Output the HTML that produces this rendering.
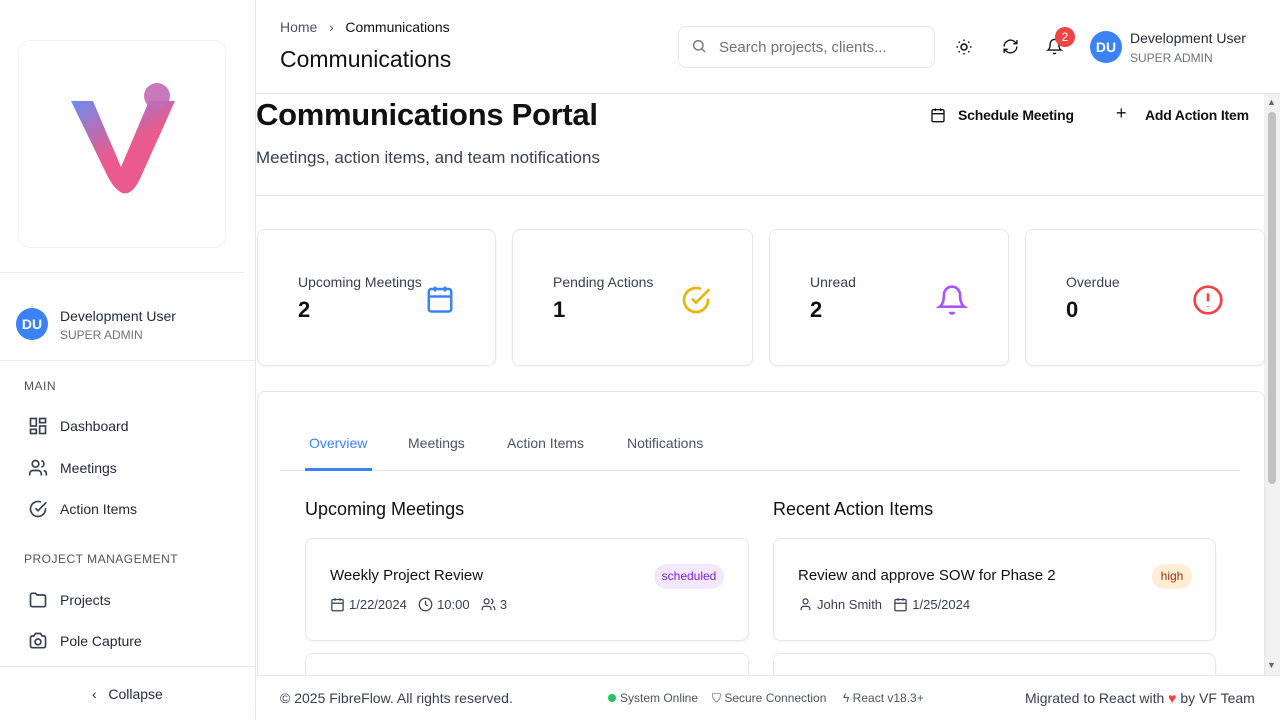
<!DOCTYPE html>
<html style="width:1280px;height:720px;overflow:hidden"><head><meta charset="utf-8"><style>
*{box-sizing:border-box;margin:0;padding:0}
body{width:1280px;height:720px;overflow:hidden;font-family:"Liberation Sans",sans-serif;background:#fff;position:relative;color:#111}
.abs{position:absolute}
svg{display:block}
.side{left:0;top:0;width:256px;height:720px;border-right:1px solid #e6e7eb;background:#fff}
.nav{position:absolute;left:28px;display:flex;align-items:center;font-size:14px;color:#1f2937}
.nav svg{margin-right:12px}
.sec{position:absolute;left:24px;font-size:12px;color:#4b5563;letter-spacing:.5px}
.card{position:absolute;border:1px solid #e5e7eb;border-radius:8px;background:#fff;box-shadow:0 1px 2px rgba(0,0,0,.04)}
.lbl{position:absolute;left:40px;top:44px;font-size:14px;color:#374151}
.num{position:absolute;left:40px;top:67px;font-size:22px;font-weight:bold;color:#111}
.ic{position:absolute;right:40px;top:54px}
.tab{position:absolute;top:435px;font-size:14px;color:#4b5563}
.meta{position:absolute;left:24px;top:58px;display:flex;align-items:center;font-size:13px;color:#374151;gap:4px}
</style></head><body>
<div class="abs side">
 <div class="abs" style="left:18px;top:40px;width:208px;height:208px;border:1px solid #f1f2f4;border-radius:12px">
  <svg class="abs" style="left:50px;top:40px" width="110" height="120" viewBox="0 0 110 120">
   <defs><linearGradient id="g" x1="0" y1="0" x2="0.6" y2="1"><stop offset="0" stop-color="#6b8cf0"/><stop offset=".6" stop-color="#ea5a8c"/></linearGradient></defs>
   <path d="M2 20 L24 20 L52 86 L80 20 L106 20 L70 100 Q60 118 50 110 Q44 106 38 94 Z" fill="url(#g)"/>
   <circle cx="88" cy="15" r="13" fill="#c26ab4" opacity=".9"/>
  </svg>
 </div>
 <div class="abs" style="left:0;top:272px;width:244px;border-top:1px solid #ececf0"></div>
 <div class="abs" style="left:16px;top:308px;width:32px;height:32px;border-radius:50%;background:#3b82f6;color:#fff;font-weight:bold;font-size:14px;text-align:center;line-height:32px">DU</div>
 <div class="abs" style="left:60px;top:308px;font-size:14px;color:#1f2937">Development User</div>
 <div class="abs" style="left:60px;top:328px;font-size:12px;color:#6b7280">SUPER ADMIN</div>
 <div class="abs" style="left:0;top:360px;width:256px;border-top:1px solid #ececf0"></div>
 <div class="sec" style="top:379px">MAIN</div>
 <div class="nav" style="top:416px"><svg width="20" height="20" viewBox="0 0 24 24" fill="none" stroke="#374151" stroke-width="2"><rect x="3" y="3" width="7" height="9"/><rect x="14" y="3" width="7" height="5"/><rect x="14" y="12" width="7" height="9"/><rect x="3" y="16" width="7" height="5"/></svg>Dashboard</div>
 <div class="nav" style="top:458px"><svg width="20" height="20" viewBox="0 0 24 24" fill="none" stroke="#374151" stroke-width="2"><circle cx="9" cy="7" r="4"/><path d="M2 21v-2a4 4 0 014-4h6a4 4 0 014 4v2M16 3.1a4 4 0 010 7.8M22 21v-2a4 4 0 00-3-3.9"/></svg>Meetings</div>
 <div class="nav" style="top:499px"><svg width="20" height="20" viewBox="0 0 24 24" fill="none" stroke="#374151" stroke-width="2"><path d="M21 11.1V12a9 9 0 11-5.3-8.2"/><path d="M9 11l3 3L22 4"/></svg>Action Items</div>
 <div class="sec" style="top:552px">PROJECT MANAGEMENT</div>
 <div class="nav" style="top:590px"><svg width="20" height="20" viewBox="0 0 24 24" fill="none" stroke="#374151" stroke-width="2"><path d="M3 6a2 2 0 012-2h4l2 2h8a2 2 0 012 2v10a2 2 0 01-2 2H5a2 2 0 01-2-2z"/></svg>Projects</div>
 <div class="nav" style="top:631px"><svg width="20" height="20" viewBox="0 0 24 24" fill="none" stroke="#374151" stroke-width="2"><path d="M3 8a2 2 0 012-2h2l2-3h6l2 3h2a2 2 0 012 2v10a2 2 0 01-2 2H5a2 2 0 01-2-2z"/><circle cx="12" cy="13" r="3.5"/></svg>Pole Capture</div>
 <div class="abs" style="left:0;top:666px;width:256px;border-top:1px solid #e6e7eb"></div>
 <div class="abs" style="left:92px;top:686px;font-size:14px;color:#1f2937">‹&nbsp;&nbsp;&nbsp;Collapse</div>
</div>

<div class="abs" style="left:280px;top:19px;font-size:14px;color:#4b5563">Home&nbsp;&nbsp;&nbsp;›&nbsp;&nbsp;&nbsp;<span style="color:#111;">Communications</span></div>
<div class="abs" style="left:280px;top:46px;font-size:23px;color:#111">Communications</div>
<div class="abs" style="left:678px;top:26px;width:257px;height:42px;border:1px solid #e5e7eb;border-radius:8px">
 <svg class="abs" style="left:12px;top:11px" width="16" height="16" viewBox="0 0 24 24" fill="none" stroke="#6b7280" stroke-width="2"><circle cx="11" cy="11" r="7"/><path d="M21 21l-5-5"/></svg>
 <div class="abs" style="left:40px;top:12px;font-size:15px;color:#6b7280">Search projects, clients...</div>
</div>
<svg class="abs" style="left:955px;top:38px" width="18" height="18" viewBox="0 0 24 24" fill="none" stroke="#111" stroke-width="2"><circle cx="12" cy="12" r="4"/><path d="M12 2v2M12 20v2M4.9 4.9l1.4 1.4M17.7 17.7l1.4 1.4M2 12h2M20 12h2M4.9 19.1l1.4-1.4M17.7 6.3l1.4-1.4"/></svg>
<svg class="abs" style="left:1002px;top:38px" width="17" height="17" viewBox="0 0 24 24" fill="none" stroke="#111" stroke-width="2"><path d="M21 12a9 9 0 01-15.5 6.2L3 16M3 12a9 9 0 0115.5-6.2L21 8M21 3v5h-5M3 21v-5h5"/></svg>
<svg class="abs" style="left:1046px;top:38px" width="17" height="17" viewBox="0 0 24 24" fill="none" stroke="#111" stroke-width="2"><path d="M6 8a6 6 0 0112 0c0 7 3 9 3 9H3s3-2 3-9M10.3 21a1.9 1.9 0 003.4 0"/></svg>
<div class="abs" style="left:1055px;top:27px;width:20px;height:20px;border-radius:50%;background:#ef4444;color:#fff;font-size:12px;text-align:center;line-height:20px">2</div>
<div class="abs" style="left:1090px;top:31px;width:32px;height:32px;border-radius:50%;background:#3b82f6;color:#fff;font-weight:bold;font-size:14px;text-align:center;line-height:32px">DU</div>
<div class="abs" style="left:1130px;top:30px;font-size:14px;color:#1f2937">Development User</div>
<div class="abs" style="left:1130px;top:51px;font-size:12px;color:#6b7280">SUPER ADMIN</div>
<div class="abs" style="left:256px;top:93px;width:1024px;border-top:1px solid #e6e7eb"></div>

<div class="abs" style="left:1264px;top:94px;width:16px;height:581px;background:#f1f1f1"></div>
<div class="abs" style="left:1268px;top:112px;width:8px;height:372px;background:#c1c1c1;border-radius:4px"></div>
<div class="abs" style="left:1267px;top:97px;font-size:9px;color:#666">▲</div>
<div class="abs" style="left:1267px;top:660px;font-size:9px;color:#666">▼</div>

<div class="abs" style="left:256px;top:97px;font-size:31px;font-weight:bold;color:#111;letter-spacing:-0.3px">Communications Portal</div>
<div class="abs" style="left:256px;top:148px;font-size:17px;color:#374151">Meetings, action items, and team notifications</div>
<svg class="abs" style="left:930px;top:107px" width="16" height="16" viewBox="0 0 24 24" fill="none" stroke="#111" stroke-width="2"><rect x="3" y="4" width="18" height="18" rx="2"/><path d="M16 2v4M8 2v4M3 10h18"/></svg>
<div class="abs" style="left:958px;top:107px;font-size:14px;font-weight:bold;color:#111;letter-spacing:-0.2px">Schedule Meeting</div>
<div class="abs" style="left:1116px;top:103px;font-size:18px;color:#111">+</div>
<div class="abs" style="left:1145px;top:107px;font-size:14px;font-weight:bold;color:#111;letter-spacing:-0.2px">Add Action Item</div>
<div class="abs" style="left:256px;top:195px;width:1008px;border-top:1px solid #e6e7eb"></div>

<div class="card" style="left:257px;top:229px;width:239px;height:137px"><div class="lbl">Upcoming Meetings</div><div class="num">2</div>
 <svg class="ic" style="right:40px;top:53px" width="30" height="32" viewBox="0 0 24 24" fill="none" stroke="#3b82f6" stroke-width="2"><rect x="3" y="4" width="18" height="18" rx="2"/><path d="M16 2v4M8 2v4M3 10h18"/></svg></div>
<div class="card" style="left:512px;top:229px;width:241px;height:137px"><div class="lbl">Pending Actions</div><div class="num">1</div>
 <svg class="ic" width="32" height="32" viewBox="0 0 24 24" fill="none" stroke="#eab308" stroke-width="2"><path d="M21 11.1V12a9 9 0 11-5.3-8.2"/><path d="M9 11l3 3L22 4"/></svg></div>
<div class="card" style="left:769px;top:229px;width:240px;height:137px"><div class="lbl">Unread</div><div class="num">2</div>
 <svg class="ic" width="32" height="32" viewBox="0 0 24 24" fill="none" stroke="#a855f7" stroke-width="2"><path d="M6 8a6 6 0 0112 0c0 7 3 9 3 9H3s3-2 3-9M10.3 21a1.9 1.9 0 003.4 0"/></svg></div>
<div class="card" style="left:1025px;top:229px;width:240px;height:137px"><div class="lbl">Overdue</div><div class="num">0</div>
 <svg class="ic" width="32" height="32" viewBox="0 0 24 24" fill="none" stroke="#ef4444" stroke-width="2"><circle cx="12" cy="12" r="10"/><path d="M12 7v6M12 16.5v.5"/></svg></div>

<div class="card" style="left:257px;top:391px;width:1008px;height:320px"></div>
<div class="tab" style="left:309px;color:#3b82f6">Overview</div>
<div class="tab" style="left:408px">Meetings</div>
<div class="tab" style="left:507px">Action Items</div>
<div class="tab" style="left:627px">Notifications</div>
<div class="abs" style="left:280px;top:470px;width:960px;border-top:1px solid #e5e7eb"></div>
<div class="abs" style="left:305px;top:468px;width:67px;height:3px;background:#3b82f6"></div>

<div class="abs" style="left:305px;top:499px;font-size:18px;color:#111">Upcoming Meetings</div>
<div class="abs" style="left:773px;top:499px;font-size:18px;color:#111">Recent Action Items</div>

<div class="card" style="left:305px;top:538px;width:444px;height:103px">
 <div class="abs" style="left:24px;top:28px;font-size:15px;color:#111">Weekly Project Review</div>
 <div class="abs" style="left:348px;top:25px;width:70px;height:25px;border-radius:13px;background:#f3e8ff;color:#7e22ce;font-size:12px;text-align:center;line-height:25px">scheduled</div>
 <div class="meta">
  <svg width="15" height="15" viewBox="0 0 24 24" fill="none" stroke="#374151" stroke-width="2"><rect x="3" y="4" width="18" height="18" rx="2"/><path d="M16 2v4M8 2v4M3 10h18"/></svg>1/22/2024&nbsp;&nbsp;
  <svg width="15" height="15" viewBox="0 0 24 24" fill="none" stroke="#374151" stroke-width="2"><circle cx="12" cy="12" r="10"/><path d="M12 6v6l4 2"/></svg>10:00&nbsp;&nbsp;
  <svg width="15" height="15" viewBox="0 0 24 24" fill="none" stroke="#374151" stroke-width="2"><circle cx="9" cy="7" r="4"/><path d="M2 21v-2a4 4 0 014-4h6a4 4 0 014 4v2M16 3.1a4 4 0 010 7.8M22 21v-2a4 4 0 00-3-3.9"/></svg>3
 </div>
</div>
<div class="card" style="left:773px;top:538px;width:443px;height:103px">
 <div class="abs" style="left:24px;top:28px;font-size:15px;color:#111">Review and approve SOW for Phase 2</div>
 <div class="abs" style="left:378px;top:25px;width:40px;height:25px;border-radius:13px;background:#ffedd5;color:#9a3412;font-size:12px;text-align:center;line-height:25px">high</div>
 <div class="meta">
  <svg width="15" height="15" viewBox="0 0 24 24" fill="none" stroke="#374151" stroke-width="2"><circle cx="12" cy="7" r="4"/><path d="M5 21v-2a4 4 0 014-4h6a4 4 0 014 4v2"/></svg>John Smith&nbsp;&nbsp;
  <svg width="15" height="15" viewBox="0 0 24 24" fill="none" stroke="#374151" stroke-width="2"><rect x="3" y="4" width="18" height="18" rx="2"/><path d="M16 2v4M8 2v4M3 10h18"/></svg>1/25/2024
 </div>
</div>
<div class="card" style="left:305px;top:653px;width:444px;height:50px"></div>
<div class="card" style="left:773px;top:653px;width:443px;height:50px"></div>

<div class="abs" style="left:256px;top:675px;width:1024px;height:45px;background:#fff;border-top:1px solid #e6e7eb"></div>
<div class="abs" style="left:280px;top:690px;font-size:14px;color:#374151">© 2025 FibreFlow. All rights reserved.</div>
<div class="abs" style="left:608px;top:694px;width:8px;height:8px;border-radius:50%;background:#22c55e"></div>
<div class="abs" style="left:620px;top:691px;font-size:12px;color:#4b5563">System Online</div>
<div class="abs" style="left:712px;top:691px;font-size:12px;color:#4b5563">⛉ Secure Connection</div>
<div class="abs" style="left:843px;top:691px;font-size:12px;color:#4b5563">ϟ React v18.3+</div>
<div class="abs" style="left:1025px;top:690px;font-size:14px;color:#374151">Migrated to React with <span style="color:#ef4444">♥</span> by VF Team</div>
</body></html>
